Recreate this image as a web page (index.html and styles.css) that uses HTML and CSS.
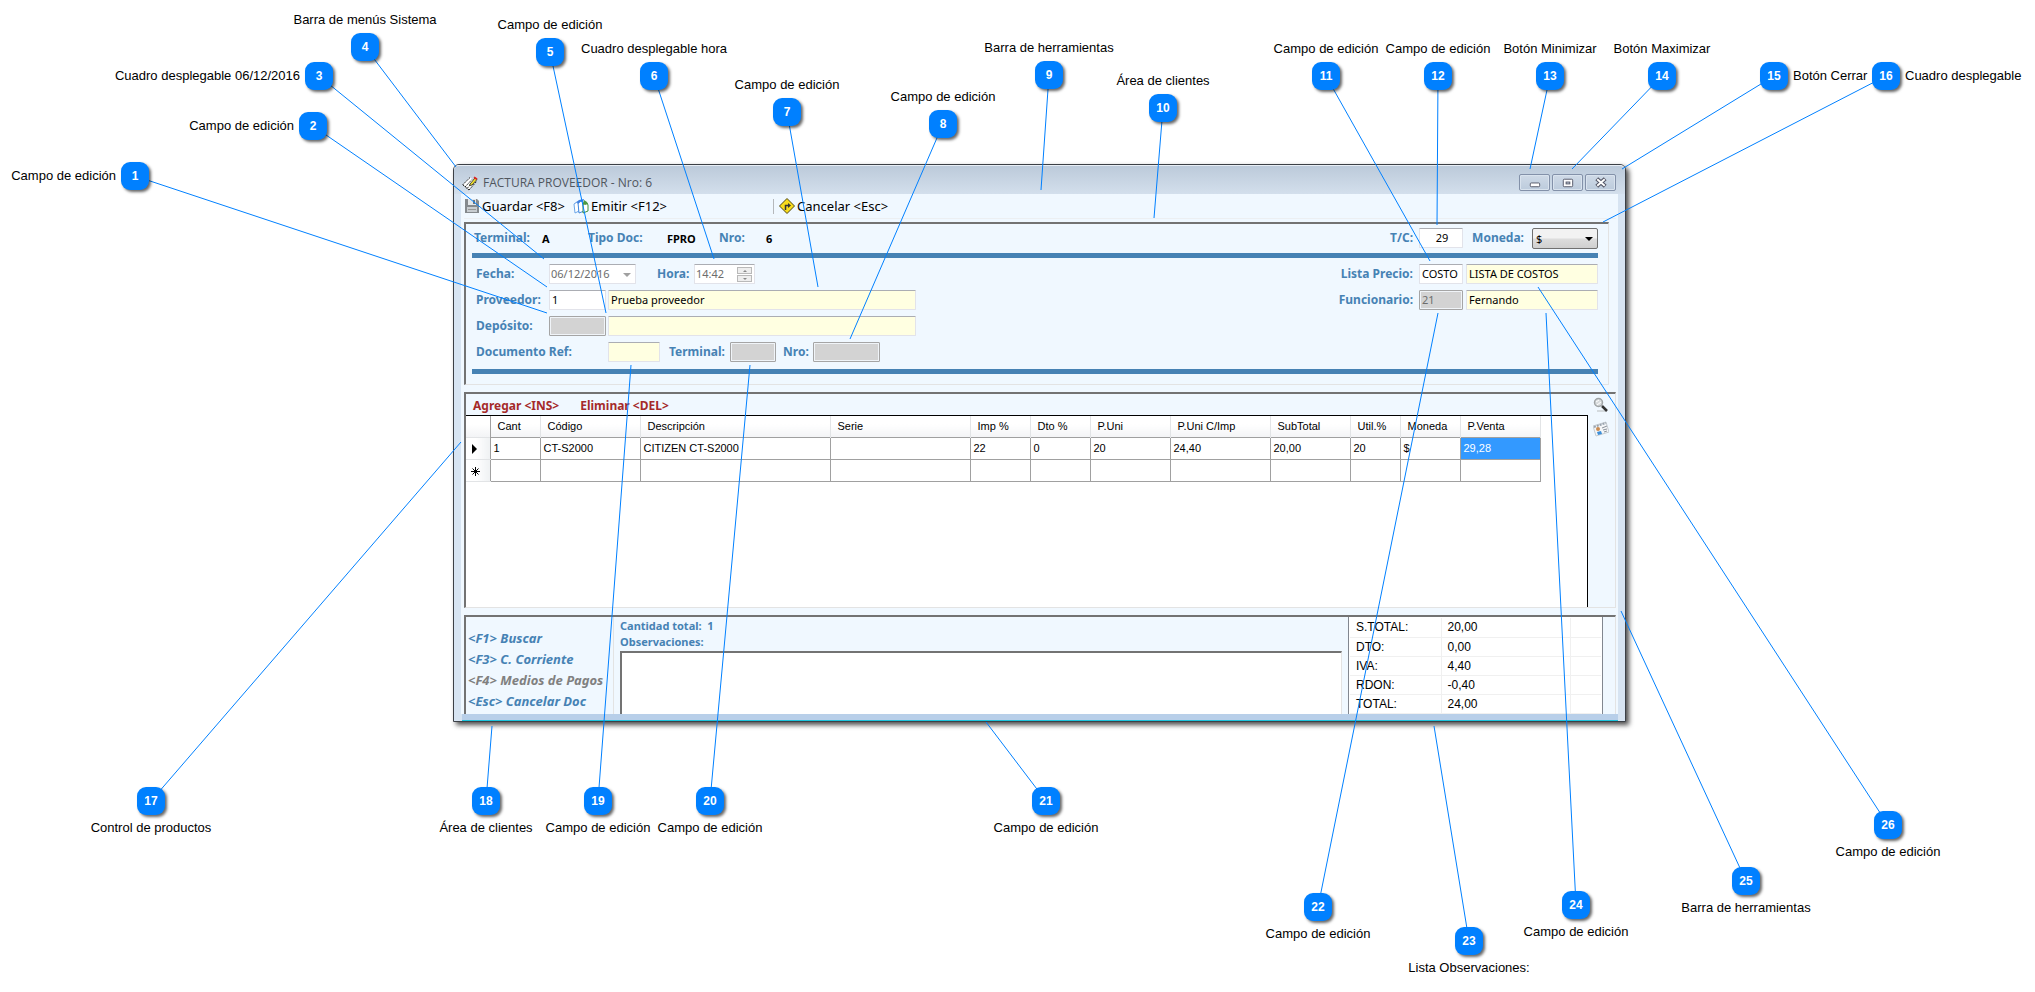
FILE: index.html
```html
<!DOCTYPE html>
<html lang="es">
<head>
<meta charset="utf-8">
<title>Factura proveedor</title>
<link rel="stylesheet" href="styles.css">
</head>
<body>
<main class="stage">
  <section class="window" aria-label="Factura proveedor">
    <header class="titlebar">
      <svg class="icon" viewBox="0 0 16 16" aria-hidden="true"><path d="M.5 10 8 2.500l6 4L7 15z" fill="#fff"/><path d="M.5 10 8 2.500M3 12l7-7.500M5 13.500 12 6M7 15l7.500-8.500M1 10l6 5" stroke="#222" stroke-dasharray="2 1" fill="none"/><path d="m8 9 5-6 2 1.500-5 5.500-2.500.500z" fill="#f6e62a" stroke="#443"/><path d="m12.500 1.500 3 2-1 1.500-3-2z" fill="#d22"/></svg>
      <h1 class="title">FACTURA PROVEEDOR - Nro: 6</h1>
      <div class="winbuttons">
        <button class="winbutton" aria-label="Minimizar"><svg viewBox="0 0 30 16"><rect x="10.500" y="8.500" width="10" height="4" rx="1" fill="#fff" stroke="#535666"/></svg></button>
        <button class="winbutton" aria-label="Maximizar"><svg viewBox="0 0 30 16"><rect x="10.500" y="4.500" width="10" height="8" rx="1" fill="#fff" stroke="#535666"/><rect x="13.500" y="7.500" width="4" height="2" fill="#c3d0df" stroke="#535666"/></svg></button>
        <button class="winbutton" aria-label="Cerrar"><svg viewBox="0 0 30 16"><path d="m11 4 9 8m0-8-9 8" stroke="#535666" stroke-width="4.500"/><path d="m11.500 4.500 8 7m0-7-8 7" stroke="#fff" stroke-width="2"/></svg></button>
      </div>
    </header>
    <div class="client">
      <nav class="toolbar">
        <button class="tool"><svg class="icon" viewBox="0 0 16 16" aria-hidden="true"><path d="M1 1h12l2 2v12H1z" fill="#858a8e"/><path d="M4 1h8v6H4z" fill="#e3e7ea"/><path d="M9 2h2v4H9z" fill="#70757a"/><path d="M3 9h10v5H3z" fill="#c8cdd1"/><path d="M4 11.500h8" stroke="#999"/></svg>Guardar &lt;F8&gt;</button>
        <button class="tool tool-emit"><svg class="icon" viewBox="0 0 16 16" aria-hidden="true"><path d="m1 6 3-2 2 1v8l-4 2z" fill="#fff" stroke="#6aa5e8"/><path d="m5 5 3-2 3 2v8l-5 2z" fill="#fff" stroke="#3f86dd"/><path d="M1 6 6 2l5-1-1 3-2-1-3 3-1-2z" fill="#3f7fe0"/><path d="m11 5 3 0 1 2v6l-5 2V7z" fill="#fff" stroke="#3f8f3a"/><path d="m10 6 1-4 3 2 1 2-3 1z" fill="#4c9a42"/></svg>Emitir &lt;F12&gt;</button>
        <span class="separator"></span>
        <button class="tool"><svg class="icon" viewBox="0 0 16 16" aria-hidden="true"><path d="m8 .5 7.500 7.500L8 15.500.5 8z" fill="#f9dc1c" stroke="#4d4410"/><path d="M6.500 12V7.500h3" fill="none" stroke="#333" stroke-width="1.500"/><path d="m9 5 3 2.500L9 10z" fill="#333"/></svg>Cancelar &lt;Esc&gt;</button>
      </nav>

      <form class="panel header-panel">
        <div class="row doc-row">
          <span class="lbl term">Terminal:</span><b class="val term-val">A</b>
          <span class="lbl doc">Tipo Doc:</span><b class="val doc-val">FPRO</b>
          <span class="lbl nro">Nro:</span><b class="val">6</b>
          <div class="right">
            <label class="lbl" for="tc">T/C:</label><input id="tc" class="field w44 center" value="29">
            <label class="lbl currency-label" for="moneda">Moneda:</label>
            <span class="select"><select id="moneda"><option>$</option></select></span>
          </div>
        </div>
        <div class="rule"></div>
        <div class="rows">
          <div class="row">
            <label class="lbl lead" for="fecha">Fecha:</label>
            <span class="combo"><input id="fecha" class="field muted" value="06/12/2016" disabled></span>
            <label class="lbl hora" for="hora">Hora:</label>
            <span class="spin"><input id="hora" class="field muted" value="14:42" disabled><span class="steps"><button type="button" class="up" aria-label="Aumentar" disabled></button><button type="button" class="down" aria-label="Disminuir" disabled></button></span></span>
            <div class="right">
              <label class="lbl" for="lista">Lista Precio:</label><input id="lista" class="field w44" value="COSTO"><input class="field cream w132" aria-label="Nombre de lista" value="LISTA DE COSTOS">
            </div>
          </div>
          <div class="row">
            <label class="lbl lead" for="prov">Proveedor:</label>
            <input id="prov" class="field w57" value="1"><input class="field cream w308" aria-label="Nombre del proveedor" value="Prueba proveedor">
            <div class="right">
              <label class="lbl" for="func">Funcionario:</label><input id="func" class="field gray w44" value="21" disabled><input class="field cream w132" aria-label="Nombre del funcionario" value="Fernando">
            </div>
          </div>
          <div class="row">
            <label class="lbl lead" for="dep">Depósito:</label>
            <input id="dep" class="field gray w57" disabled><input class="field cream w308" aria-label="Nombre del depósito">
          </div>
          <div class="row">
            <label class="lbl lead-wide" for="ref">Documento Ref:</label>
            <input id="ref" class="field cream w52">
            <label class="lbl ref-term" for="rterm">Terminal:</label><input id="rterm" class="field gray w46" disabled>
            <label class="lbl ref-nro" for="rnro">Nro:</label><input id="rnro" class="field gray w67" disabled>
          </div>
        </div>
        <div class="rule"></div>
      </form>

      <section class="panel grid-panel">
        <div class="grid-main">
          <div class="grid-actions"><button>Agregar &lt;INS&gt;</button><button>Eliminar &lt;DEL&gt;</button></div>
          <div class="grid-body">
            <table class="grid">
              <colgroup><col class="c24"><col class="c50"><col class="c100"><col class="c190"><col class="c140"><col class="c60"><col class="c60"><col class="c80"><col class="c100"><col class="c80"><col class="c50"><col class="c60"><col class="c80"></colgroup>
              <thead><tr><th></th><th>Cant</th><th>Código</th><th>Descripción</th><th>Serie</th><th>Imp %</th><th>Dto %</th><th>P.Uni</th><th>P.Uni C/Imp</th><th>SubTotal</th><th>Util.%</th><th>Moneda</th><th>P.Venta</th></tr></thead>
              <tbody>
                <tr><td class="mark"><svg viewBox="0 0 20 20" aria-hidden="true"><path d="m6 6 5 5-5 5z"/></svg></td><td>1</td><td>CT-S2000</td><td>CITIZEN CT-S2000</td><td></td><td>22</td><td>0</td><td>20</td><td>24,40</td><td>20,00</td><td>20</td><td>$</td><td class="selected">29,28</td></tr>
                <tr><td class="mark"><svg viewBox="0 0 20 20" aria-hidden="true"><path d="M5 11.500h9M9.500 7v9M6.500 8.500l6 6m0-6-6 6" stroke="#000"/></svg></td><td></td><td></td><td></td><td></td><td></td><td></td><td></td><td></td><td></td><td></td><td></td><td></td></tr>
              </tbody>
            </table>
          </div>
        </div>
        <aside class="side-tools">
          <button aria-label="Buscar"><svg class="icon" viewBox="0 0 16 16"><path d="M4 14h9" stroke="#d4dade" stroke-width="2"/><circle cx="5.500" cy="5.500" r="4" fill="#d7dbdd" stroke="#a0a4a6" stroke-width="1.500"/><path d="M3 5l3-2M4 8l4-3" stroke="#fff"/><path d="m9 9 5 5" stroke="#333" stroke-width="2.500"/></svg></button>
          <button aria-label="Ficha"><svg class="icon" viewBox="0 0 16 16"><path d="m0 5 13-4 3 10-13 4z" fill="#f4f6f8" stroke="#c5cbd0"/><path d="m1 6 12-4" stroke="#9aa4b0" stroke-width="2" stroke-dasharray="2 1"/><circle cx="5" cy="8" r="2" fill="#c98b52"/><path d="m4 11 4-1 1 3-4 1z" fill="#3c8ed8"/><path d="m9 7 5-2m-4 4 4-1m-3 3 3-1" stroke="#8a929c"/></svg></button>
        </aside>
      </section>

      <section class="panel foot-panel">
        <div class="shortcuts">
          <button>&lt;F1&gt; Buscar</button><button>&lt;F3&gt; C. Corriente</button><button disabled>&lt;F4&gt; Medios de Pagos</button><button>&lt;Esc&gt; Cancelar Doc</button>
        </div>
        <div class="notes">
          <p class="count">Cantidad total:&nbsp; 1</p>
          <label for="obs">Observaciones:</label>
          <textarea id="obs"></textarea>
        </div>
        <div class="totals-box">
          <table class="totals">
            <tr><th>S.TOTAL:</th><td>20,00</td><td></td></tr>
            <tr><th>DTO:</th><td>0,00</td><td></td></tr>
            <tr><th>IVA:</th><td>4,40</td><td></td></tr>
            <tr><th>RDON:</th><td>-0,40</td><td></td></tr>
            <tr><th>TOTAL:</th><td>24,00</td><td></td></tr>
          </table>
        </div>
      </section>
    </div>
    <div class="window-foot"></div>
  </section>
  <svg class="leaders" id="leaders" aria-hidden="true"></svg>
  <div id="pins"></div>
</main>
<script src="pins.js"></script>
</body>
</html>
```

FILE: styles.css
```css
* { box-sizing: border-box; }

body {
  margin: 0;
  background: #fff;
  font-family: "Noto Sans", sans-serif;
  font-size: 12px;
  color: #000;
}

button { font: inherit; color: inherit; background: none; border: 0; padding: 0; }
.icon { width: 16px; height: 16px; flex: none; display: block; }

.stage {
  position: relative;
  min-height: 100vh;
  padding: 164px 409px 270px 453px;
  overflow: hidden;
}

/* window frame */
.window {
  border: 1px solid #3c4046;
  border-radius: 6px 6px 0 0;
  background: #d7e4f2;
  box-shadow: 3px 3px 5px rgba(0, 0, 0, .7);
}
.titlebar {
  display: flex;
  align-items: center;
  height: 29px;
  padding: 5px 9px 0 8px;
  border-top: 1px solid #e8eef5;
  border-radius: 5px 5px 0 0;
  background: linear-gradient(#bccada, #d3dfec);
}
.title {
  flex: 1;
  margin: 0 0 0 5px;
  font-family: "Open Sans", sans-serif;
  font-size: 12px;
  font-weight: 400;
  color: #50565e;
}
.winbuttons { display: flex; gap: 2px; }
.winbutton {
  width: 31px;
  height: 17px;
  border: 1px solid #8391a9;
  border-radius: 2px;
  background: linear-gradient(#cfdae7, #bccbdc);
  box-shadow: inset 0 0 0 1px #d9e3ee;
}
.winbutton svg { display: block; width: 100%; height: 100%; }
.client { margin: 0 7px; padding: 0 2px 0 3px; background: #f0f8ff; }

.toolbar {
  display: flex;
  align-items: center;
  height: 25px;
  margin-bottom: 3px;
  border-bottom: 1px solid #eceff2;
}
.tool { display: flex; align-items: center; gap: 2px; font-size: 13px; line-height: 16px; }
.tool-emit { margin-left: 8px; }
.separator { width: 1px; height: 15px; margin: 0 5px 0 106px; background: #b5b8bb; }

/* sunken panels */
.panel {
  border: 1px solid #e3e3e3;
  border-top: 2px solid #737373;
  border-left: 2px solid #737373;
  background: #f0f8ff;
}
.header-panel { margin-right: 7px; padding: 3px 10px 10px 6px; }
.row { display: flex; align-items: center; height: 20px; }
.rows { display: grid; gap: 6px; padding: 6px 0 7px; }
.rule { height: 5px; background: #4682b4; }
.lbl { font-weight: 700; line-height: 16px; color: #4682b4; white-space: nowrap; }
.val { font-size: 11px; }
.doc-row { height: 26px; padding: 0 0 4px 2px; }
.term { width: 68px; }
.term-val { width: 46px; }
.doc { width: 79px; }
.doc-val { width: 52px; }
.nro { width: 47px; }
.right { display: flex; align-items: center; margin-left: auto; }
.right .lbl { margin-right: 6px; }
.right .field + .field { margin-left: 3px; }
.right .currency-label { margin: 0 8px 0 9px; }
.lead { width: 77px; padding-left: 4px; }
.lead-wide { width: 136px; padding-left: 4px; }
.hora { width: 58px; padding-left: 21px; }
.ref-term { width: 70px; padding-left: 9px; }
.ref-nro { width: 37px; padding-left: 7px; }

.field {
  height: 20px;
  padding: 0 0 1px 2px;
  border: 1px solid #e2e3ea;
  border-top-color: #abadb3;
  border-radius: 1px;
  background: #fff;
  font: 11px "Noto Sans", sans-serif;
  color: #000;
}
.w57 + .field { margin-left: 2px; }
.cream { background: #ffffe1; }
.gray { background: #d3d3d3; border: 1px solid #a5a5a5; box-shadow: inset 0 0 0 1px #f0f4f8; color: #6d6d6d; }
.muted { width: 100%; padding-left: 1px; color: #6d6d6d; }
.center { text-align: center; }
.w44 { width: 44px; }
.w46 { width: 46px; }
.w52 { width: 52px; }
.w57 { width: 57px; }
.w67 { width: 67px; }
.w132 { width: 132px; }
.w308 { width: 308px; }

.combo { position: relative; display: flex; width: 87px; }
.combo::after {
  content: "";
  position: absolute;
  right: 5px;
  top: 9px;
  border: 4px solid transparent;
  border-top-color: #a0a0a0;
  border-bottom: 0;
}
.spin { position: relative; display: flex; width: 61px; }
.steps { position: absolute; right: 3px; top: 3px; display: grid; gap: 1px; }
.steps button { display: grid; place-items: center; width: 15px; height: 7px; border: 1px solid #b9b9b9; background: #eee; }
.steps button::after { content: ""; border: 2px solid transparent; }
.steps .up::after { border-bottom-color: #888; border-top: 0; }
.steps .down::after { border-top-color: #888; border-bottom: 0; }
.select { position: relative; display: flex; }
.select select {
  appearance: none;
  width: 66px;
  height: 21px;
  padding: 0 3px;
  border: 1px solid #707070;
  border-radius: 2px;
  background: linear-gradient(#f2f2f2 45%, #dcdcdc 55%, #cfcfcf);
  font: 11px "Noto Sans", sans-serif;
}
.select::after {
  content: "";
  position: absolute;
  right: 5px;
  top: 9px;
  border: 4px solid transparent;
  border-top-color: #000;
  border-bottom: 0;
  pointer-events: none;
}

/* product grid */
.grid-panel { display: flex; margin-top: 7px; height: 216px; }
.grid-main { flex: 1; display: flex; flex-direction: column; }
.grid-actions {
  display: flex;
  align-items: end;
  gap: 21px;
  height: 21px;
  padding-left: 7px;
  font-size: 12px;
  line-height: 18px;
  font-weight: 700;
  color: #a52a2a;
}
.grid-body { flex: 1; border-top: 1px solid #000; border-right: 1px solid #000; background: #fff; }
.grid { border-collapse: collapse; table-layout: fixed; width: 1074px; font: 11px "Liberation Sans", sans-serif; }
.grid th { height: 21px; padding: 0 0 0 7px; text-align: left; font-weight: 400; white-space: nowrap; background: linear-gradient(#fff 40%, #f3f4f6); border-right: 1px solid #e2e4e6; }
.grid th:first-child { border-right-color: #a0a0a0; }
.grid td { height: 22px; padding: 0 0 0 3px; border: 1px solid #a0a0a0; }
.grid .mark { padding: 0; border-left: 0; border-top-color: #e2e4e6; border-bottom-color: #e2e4e6; background: linear-gradient(90deg, #fff 40%, #eff1f3); }
.mark svg { display: block; width: 20px; height: 20px; }
.grid .selected { background: #3399ff; color: #fff; }
.c24 { width: 24px; }
.c50 { width: 50px; }
.c60 { width: 60px; }
.c80 { width: 80px; }
.c100 { width: 100px; }
.c140 { width: 140px; }
.c190 { width: 190px; }
.side-tools { display: grid; align-content: start; gap: 8px; width: 27px; padding: 3px 0 0 5px; }

/* footer */
.foot-panel { display: flex; margin-top: 7px; height: 99px; border-bottom: 0; }
.shortcuts {
  display: grid;
  align-content: start;
  width: 148px;
  padding: 10px 0 0 2px;
  border-right: 1px solid #e3e3e3;
  font-size: 13px;
  font-weight: 700;
  font-style: italic;
  color: #4682b4;
  white-space: nowrap;
}
.shortcuts button { height: 21px; text-align: left; }
.shortcuts button:disabled { color: #808080; }
.notes {
  flex: 1;
  display: flex;
  flex-direction: column;
  margin: 1px 6px 0 6px;
  font-size: 11px;
  font-weight: 700;
  line-height: 16px;
  color: #4682b4;
}
.notes p { margin: 0; }
.notes label { padding-bottom: 1px; }
.notes textarea {
  flex: 1;
  width: 100%;
  border: 2px solid #737373;
  border-right: 1px solid #e3e3e3;
  border-bottom: 0;
  resize: none;
  background: #fff;
}
.totals-box {
  width: 255px;
  margin-right: 12px;
  padding: 1px 1px 0;
  border: solid #828790;
  border-width: 0 1px;
  background: #fff;
  overflow: hidden;
}
.totals { border-collapse: collapse; width: 100%; font: 12px "Liberation Sans", sans-serif; }
.totals th, .totals td { height: 19px; padding: 0 0 0 6px; border-bottom: 1px solid #f0f0f0; border-right: 1px solid #f0f0f0; text-align: left; font-weight: 400; }
.totals th { width: 91px; }
.totals td:last-child { width: 31px; border-right: 0; }
.window-foot { height: 7px; margin: 0 7px 0 8px; background: #b8cfe9; border-bottom: 1px solid #1cc4dc; }

/* numbered callouts */
.leaders { position: absolute; inset: 0; width: 100%; height: 100%; pointer-events: none; }
.leaders line { stroke: #0080ff; stroke-width: 1; }
.pin {
  position: absolute;
  display: grid;
  place-items: center;
  width: 28px;
  height: 28px;
  margin: -14px 0 0 -14px;
  border-radius: 9px;
  background: #0080ff;
  box-shadow: 2px 2px 3px rgba(0, 0, 0, .6);
  font: 700 12px "Liberation Sans", sans-serif;
  color: #fff;
}
.pin-text {
  position: absolute;
  font: 400 13px/16px "Liberation Sans", sans-serif;
  color: #000;
  white-space: nowrap;
}
.top .pin-text { bottom: 33px; }
.bottom .pin-text { top: 33px; }
.left .pin-text { right: 33px; }
.right-side .pin-text { left: 33px; }
```

FILE: pins.js
```js
// [x, y, target x, target y, label side, label]
const pins = [
  [135, 176, 547, 313, 'left', 'Campo de edición'],
  [313, 126, 547, 287, 'left', 'Campo de edición'],
  [319, 76, 544, 259, 'left', 'Cuadro desplegable 06/12/2016'],
  [365, 47, 456, 167, 'top', 'Barra de menús Sistema'],
  [550, 52, 606, 313, 'top', 'Campo de edición'],
  [654, 76, 714, 259, 'top', 'Cuadro desplegable hora'],
  [787, 112, 818, 287, 'top', 'Campo de edición'],
  [943, 124, 850, 339, 'top', 'Campo de edición'],
  [1049, 75, 1041, 190, 'top', 'Barra de herramientas'],
  [1163, 108, 1154, 218, 'top', 'Área de clientes'],
  [1326, 76, 1430, 261, 'top', 'Campo de edición'],
  [1438, 76, 1437, 225, 'top', 'Campo de edición'],
  [1550, 76, 1530, 169, 'top', 'Botón Minimizar'],
  [1662, 76, 1572, 169, 'top', 'Botón Maximizar'],
  [1774, 76, 1622, 169, 'right-side', 'Botón Cerrar'],
  [1886, 76, 1603, 222, 'right-side', 'Cuadro desplegable'],
  [151, 801, 461, 442, 'bottom', 'Control de productos'],
  [486, 801, 492, 726, 'bottom', 'Área de clientes'],
  [598, 801, 631, 365, 'bottom', 'Campo de edición'],
  [710, 801, 750, 365, 'bottom', 'Campo de edición'],
  [1046, 801, 986, 722, 'bottom', 'Campo de edición'],
  [1318, 907, 1438, 313, 'bottom', 'Campo de edición'],
  [1469, 941, 1434, 726, 'bottom', 'Lista Observaciones:'],
  [1576, 905, 1546, 313, 'bottom', 'Campo de edición'],
  [1746, 881, 1621, 611, 'bottom', 'Barra de herramientas'],
  [1888, 825, 1538, 287, 'bottom', 'Campo de edición'],
];

const leaders = document.getElementById('leaders');
const layer = document.getElementById('pins');

pins.forEach(([x, y, tx, ty, side, label], i) => {
  const line = document.createElementNS('http://www.w3.org/2000/svg', 'line');
  line.setAttribute('x1', x);
  line.setAttribute('y1', y);
  line.setAttribute('x2', tx);
  line.setAttribute('y2', ty);
  leaders.append(line);

  const pin = document.createElement('div');
  pin.className = `pin ${side}`;
  pin.style.left = `${x}px`;
  pin.style.top = `${y}px`;
  pin.append(String(i + 1));
  const text = document.createElement('span');
  text.className = 'pin-text';
  text.textContent = label;
  pin.append(text);
  layer.append(pin);
});
```
